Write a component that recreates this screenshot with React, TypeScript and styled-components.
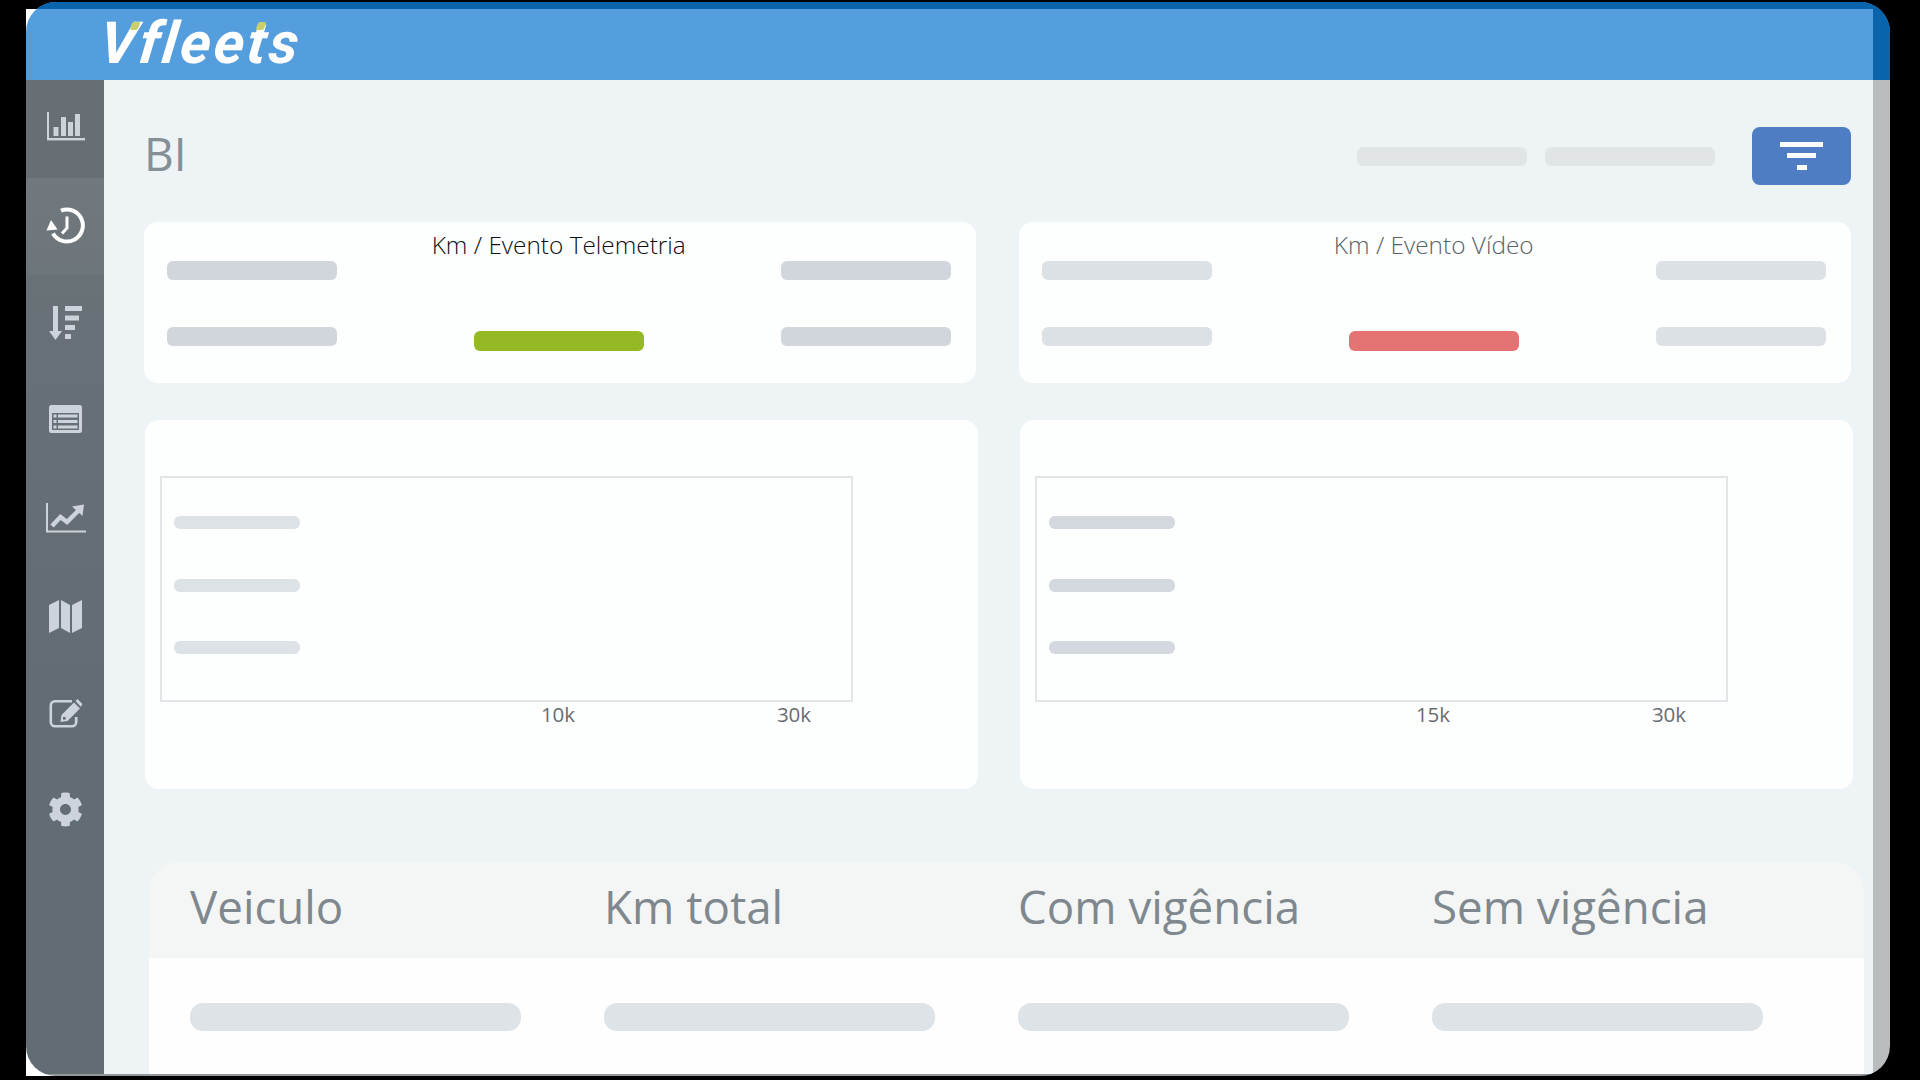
import React from "react";
import styled, { createGlobalStyle } from "styled-components";
import { FaCog } from "react-icons/fa";

const GlobalStyle = createGlobalStyle`
    html, body {
        margin: 0;
        height: 100%;
        background: #000;
        font-family: "Open Sans", "Liberation Sans", sans-serif;
        overflow: hidden;
    }
`;

const Frame = styled.div`
    width: 1864px;
    height: 1074px;
    margin: 2px 0 0 26px;
    background: linear-gradient(#fff, #fff) 0 7px / 40px 100% no-repeat;
`;

const Screen = styled.div`
    display: flex;
    flex-direction: column;
    height: 100%;
    border-radius: 30px;
    overflow: hidden;
`;

const Header = styled.header`
    display: flex;
    flex: none;
    height: 78px;
    box-sizing: border-box;
    border-top: 7px solid #0a64ac;
    background: #549edd;
`;

const Logo = styled.div`
    position: relative;
    margin-left: 70px;
    flex: 1;
    color: #fff;
    font-family: Roboto, "Open Sans", sans-serif;
    font-style: italic;
    font-weight: 700;
    font-size: 58px;
    line-height: 68px;
    letter-spacing: 3px;
`;

const LogoText = styled.span`
    display: inline-block;
    transform: skewX(-7deg);
    transform-origin: left bottom;
`;

const LogoAccent = styled.span<{ $left: number }>`
    position: absolute;
    top: 13px;
    left: ${(p) => p.$left}px;
    width: 8px;
    height: 8px;
    background: #c9cf6a;
    transform: skewX(-20deg);
    border-radius: 2px;
`;

const HeaderCap = styled.div`
    flex: none;
    width: 17px;
    background: #0a64ac;
`;

const Body = styled.div`
    display: flex;
    flex: 1;
    min-height: 0;
    border-bottom: 2px solid #94989c;
`;

const Sidebar = styled.nav`
    flex: none;
    width: 78px;
    background: linear-gradient(#6b7479, #626c73 60%);
`;

const NavItem = styled.div<{ $tone?: string; $nudge?: number }>`
    display: flex;
    align-items: center;
    justify-content: center;
    height: 97.7px;
    box-sizing: border-box;
    padding-bottom: ${(p) => 3.5 - (p.$nudge ?? 0)}px;
    padding-left: 1px;
    color: #cdd3da;
    background: ${(p) => p.$tone || "transparent"};
`;

const Main = styled.main`
    flex: 1;
    min-width: 0;
    box-sizing: border-box;
    padding: 47px 22px 0 40px;
    background: #eef3f6;
    overflow: hidden;
`;

const ScrollEdge = styled.div`
    flex: none;
    width: 17px;
    background: #b9bdbf;
`;

const TitleRow = styled.div`
    display: flex;
    align-items: center;
    height: 58px;
`;

const PageTitle = styled.h1`
    flex: 1;
    margin: 0 0 6px;
    color: #858f96;
    font-size: 46px;
    font-weight: 400;
    line-height: 52px;
`;

const Bar = styled.div<{ $w: number; $h: number; $color: string; $radius?: number }>`
    flex: none;
    width: ${(p) => p.$w}px;
    height: ${(p) => p.$h}px;
    background: ${(p) => p.$color};
    border-radius: ${(p) => p.$radius ?? 6}px;
`;

const TopFilters = styled.div`
    display: flex;
    gap: 18px;
    margin-right: 37px;
`;

const FilterButton = styled.button`
    display: flex;
    align-items: center;
    justify-content: center;
    width: 99px;
    height: 58px;
    padding: 0;
    border: 0;
    border-radius: 8px;
    background: #4f7dc3;
`;

const TwoCols = styled.section`
    display: grid;
    grid-template-columns: 832px 832px;
    column-gap: 43px;
`;

const KpiRow = styled(TwoCols)`
    margin-top: 37px;
`;

const KpiCard = styled.div`
    display: flex;
    justify-content: space-between;
    height: 161px;
    box-sizing: border-box;
    padding: 0 25px 0 22.5px;
    background: #fdfefe;
    border-radius: 14px;
`;

const KpiSide = styled.div`
    display: flex;
    flex-direction: column;
    gap: 47px;
    padding-top: 39px;
`;

const KpiMiddle = styled.div`
    display: flex;
    flex-direction: column;
    align-items: center;
    padding-top: 6px;
`;

const KpiTitle = styled.div<{ $muted?: boolean }>`
    height: 33px;
    margin-bottom: 70px;
    color: ${(p) => (p.$muted ? "#596268" : "#0e1012")};
    font-size: 24.4px;
    font-weight: 300;
    line-height: 34px;
    white-space: nowrap;
`;

const ChartRow = styled(TwoCols)`
    margin: 37px 0 0 1px;
    width: 1709px;
    column-gap: 42px;
    grid-template-columns: 833px 833px;
`;

const ChartCard = styled.div`
    height: 369px;
    box-sizing: border-box;
    padding: 56px 0 0 15px;
    background: #fdfefe;
    border-radius: 14px;
`;

const Plot = styled.div`
    display: flex;
    flex-direction: column;
    gap: 49.5px;
    width: 693px;
    height: 226px;
    box-sizing: border-box;
    padding: 38px 0 0 12px;
    border: 2px solid #e2e5e8;
`;

const Axis = styled.div`
    display: flex;
    gap: 136px;
    padding-left: 348px;
`;

const Tick = styled.span`
    width: 100px;
    color: #666d72;
    font-size: 20.5px;
    line-height: 24px;
    text-align: center;
`;

const Table = styled.section`
    width: 1715px;
    margin: 73px 0 0 5px;
`;

const TableHead = styled.div`
    display: grid;
    grid-template-columns: repeat(4, 414px);
    height: 96px;
    padding-left: 41px;
    background: #f4f6f6;
    border-radius: 30px 30px 0 0;
`;

const HeadCell = styled.div`
    color: #7f888e;
    font-size: 45.7px;
    line-height: 88px;
    white-space: nowrap;
`;

const TableRow = styled.div`
    display: grid;
    grid-template-columns: repeat(4, 414px);
    height: 116px;
    box-sizing: border-box;
    padding: 45px 0 0 41px;
    background: #fefefe;
`;

const SKELETON = "#dde3e7";

const BarChartIcon = () => (
    <svg width="40" height="30" viewBox="0 0 40 30" fill="currentColor">
        <rect x="1" y="0" width="2" height="28" />
        <rect x="1" y="26" width="38" height="2.4" />
        <rect x="7.5" y="15" width="5" height="9" />
        <rect x="15" y="5" width="5" height="19" />
        <rect x="22" y="10" width="5" height="14" />
        <rect x="29" y="2" width="5" height="22" />
    </svg>
);

const HistoryIcon = () => (
    <svg width="40" height="40" viewBox="0 0 40 40" fill="none" stroke="#fff">
        <path d="M15 4.6A16 16 0 1 1 7 27.5" strokeWidth="4" />
        <path d="M21 10.5V22L16 27.5" strokeWidth="3" />
        <polygon points="0.5,24.5 11.5,23.5 5,14" fill="#fff" stroke="none" />
    </svg>
);

const SortIcon = () => (
    <svg width="34" height="34" viewBox="0 0 34 34" fill="currentColor">
        <rect x="4" y="0" width="5" height="28" />
        <polygon points="0,25 13,25 6.5,34" />
        <rect x="16" y="0" width="17" height="5" />
        <rect x="16" y="9.5" width="14" height="5" />
        <rect x="16" y="19" width="10" height="5" />
        <rect x="16" y="28" width="6" height="5" />
    </svg>
);

const ListIcon = () => (
    <svg width="33" height="28" viewBox="0 0 33 28">
        <rect width="33" height="28" rx="2.5" fill="currentColor" />
        <rect x="3" y="8" width="27" height="17" fill="#667077" />
        {[9.5, 15, 20.5].map((y) => (
            <React.Fragment key={y}>
                <rect x="4.5" y={y} width="3" height="3" fill="currentColor" />
                <rect x="9" y={y} width="19.5" height="3" fill="currentColor" />
            </React.Fragment>
        ))}
    </svg>
);

const TrendIcon = () => (
    <svg width="40" height="30" viewBox="0 0 40 30" fill="none" stroke="currentColor">
        <path d="M1 0V28.5H40" strokeWidth="2" />
        <path d="M6 23L14.5 14L21 19L33 7" strokeWidth="4.5" />
        <polygon points="26,3.5 38,1.5 36.5,13" fill="currentColor" stroke="none" />
    </svg>
);

const MapIcon = () => (
    <svg width="33" height="35" viewBox="0 0 33 35" fill="currentColor">
        <polygon points="0,6 10,1 10,29 0,34" />
        <polygon points="12,1 21,6 21,34 12,29" />
        <polygon points="23,6 33,1 33,29 23,34" />
    </svg>
);

const EditIcon = () => (
    <svg width="34" height="30" viewBox="0 0 34 30">
        <path
            d="M23 3.2H6A4.2 4.2 0 0 0 1.8 7.4V24A4.2 4.2 0 0 0 6 28.2H23A4.2 4.2 0 0 0 27.2 24V19"
            fill="none"
            stroke="currentColor"
            strokeWidth="2.6"
        />
        <polygon points="11.5,24 12.5,17 25,4.5 31,10.5 18.5,23" fill="currentColor" />
        <polygon points="26.5,3 28.5,1 33.5,6 31.8,8.8" fill="currentColor" />
        <rect x="14" y="19" width="2.6" height="2.6" fill="#626c73" />
    </svg>
);

const FilterLines = () => (
    <svg width="43" height="28" viewBox="0 0 43 28" fill="#fff">
        <rect x="0" y="0" width="43" height="5" />
        <rect x="7" y="11" width="29" height="5" />
        <rect x="17" y="23" width="10" height="5" />
    </svg>
);

interface KpiProps {
    title: string;
    color: string;
    tone: string;
    muted?: boolean;
}

const Kpi: React.FC<KpiProps> = ({ title, color, tone, muted }) => (
    <KpiCard>
        <KpiSide>
            <Bar $w={170} $h={19} $color={tone} />
            <Bar $w={170} $h={19} $color={tone} />
        </KpiSide>
        <KpiMiddle>
            <KpiTitle $muted={muted}>{title}</KpiTitle>
            <Bar $w={170} $h={20} $color={color} />
        </KpiMiddle>
        <KpiSide>
            <Bar $w={170} $h={19} $color={tone} />
            <Bar $w={170} $h={19} $color={tone} />
        </KpiSide>
    </KpiCard>
);

const Chart: React.FC<{ ticks: string[]; tone: string }> = ({ ticks, tone }) => (
    <ChartCard>
        <Plot>
            <Bar $w={126} $h={13} $color={tone} />
            <Bar $w={126} $h={13} $color={tone} />
            <Bar $w={126} $h={13} $color={tone} />
        </Plot>
        <Axis>
            {ticks.map((t) => (
                <Tick key={t}>{t}</Tick>
            ))}
        </Axis>
    </ChartCard>
);

const columns = ["Veiculo", "Km total", "Com vigência", "Sem vigência"];

export default function App() {
    return (
        <>
            <GlobalStyle />
            <Frame>
                <Screen>
                    <Header>
                        <Logo>
                            <LogoText>Vfleets</LogoText>
                            <LogoAccent $left={35} />
                            <LogoAccent $left={161} />
                        </Logo>
                        <HeaderCap />
                    </Header>
                    <Body>
                        <Sidebar>
                            <NavItem $tone="#686f74"><BarChartIcon /></NavItem>
                            <NavItem $tone="linear-gradient(#71797e, #6c757a)" $nudge={1.5}><HistoryIcon /></NavItem>
                            <NavItem $nudge={1}><SortIcon /></NavItem>
                            <NavItem $nudge={-1.5}><ListIcon /></NavItem>
                            <NavItem $nudge={1}><TrendIcon /></NavItem>
                            <NavItem $nudge={1.5}><MapIcon /></NavItem>
                            <NavItem><EditIcon /></NavItem>
                            <NavItem $nudge={-2}><FaCog size={35} /></NavItem>
                        </Sidebar>
                        <Main>
                            <TitleRow>
                                <PageTitle>BI</PageTitle>
                                <TopFilters>
                                    <Bar $w={170} $h={19} $color="#e1e5e8" />
                                    <Bar $w={170} $h={19} $color="#e1e5e8" />
                                </TopFilters>
                                <FilterButton>
                                    <FilterLines />
                                </FilterButton>
                            </TitleRow>
                            <KpiRow>
                                <Kpi title="Km / Evento Telemetria" color="#94b925" tone="#d0d6dc" />
                                <Kpi title="Km / Evento Vídeo" color="#e57373" tone="#dce1e5" muted />
                            </KpiRow>
                            <ChartRow>
                                <Chart ticks={["10k", "30k"]} tone="#dde2e6" />
                                <Chart ticks={["15k", "30k"]} tone="#d3d9de" />
                            </ChartRow>
                            <Table>
                                <TableHead>
                                    {columns.map((c) => (
                                        <HeadCell key={c}>{c}</HeadCell>
                                    ))}
                                </TableHead>
                                <TableRow>
                                    {columns.map((c) => (
                                        <Bar key={c} $w={331} $h={28} $color={SKELETON} $radius={13} />
                                    ))}
                                </TableRow>
                            </Table>
                        </Main>
                        <ScrollEdge />
                    </Body>
                </Screen>
            </Frame>
        </>
    );
}
